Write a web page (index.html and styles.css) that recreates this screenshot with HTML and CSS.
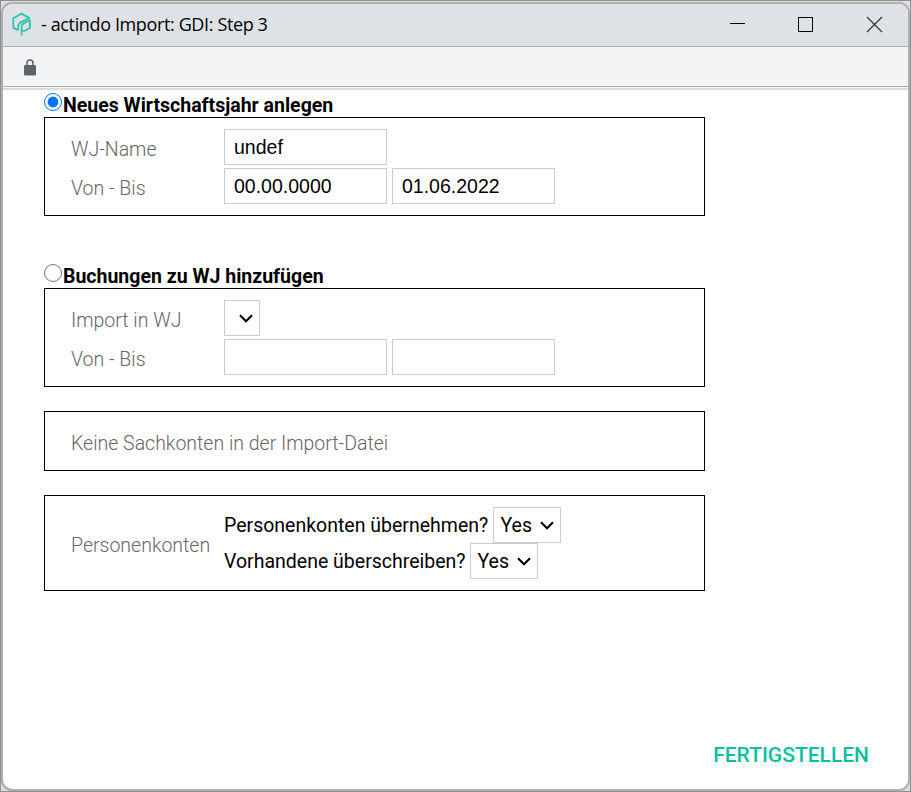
FILE: index.html
```html
<!DOCTYPE html>
<html lang="de">
<head>
<meta charset="utf-8">
<title>- actindo Import: GDI: Step 3</title>
<link rel="stylesheet" href="styles.css">
</head>
<body>
<div class="window">
  <header class="titlebar">
    <svg class="logo" width="20" height="24" viewBox="0 0 20 24" fill="none" stroke="#2cc5aa" stroke-width="1.8" stroke-linejoin="round"><path d="M6 18.300 1.300 15.600V6.300L9.500 1.600l7.800 4.500-7.500 3.700c-2.700 1.200-3.600 2.200-3.600 4.500v4"/><path d="M9.600 23.500V15c0-2.100.7-3.100 2.400-3.900l5.900-2.900v7.600l-4.900 2.900-3.200.1"/></svg>
    <span class="title">- actindo Import: GDI: Step 3</span>
    <svg class="controls" width="156" height="20" viewBox="0 0 156 20" fill="none" stroke="#000"><path d="M0 9.500h15M68.500 3.500h14v14h-14z" shape-rendering="crispEdges"/><path d="M137 3l15 15M152 3l-15 15" stroke="#333" stroke-width="1.2"/></svg>
  </header>
  <div class="toolbar">
    <svg width="12" height="17" viewBox="0 0 12 17"><path d="M3 6V4a3 3 0 0 1 6 0v2" fill="none" stroke="#5f6368" stroke-width="1.5"/><rect y="6" width="12" height="10.500" rx="1.300" fill="#5f6368"/></svg>
  </div>
  <main class="content">
    <label class="choice"><input type="radio" name="mode" checked><b>Neues Wirtschaftsjahr anlegen</b></label>
    <section class="box year">
      <div class="row"><span class="label">WJ-Name</span><input class="field" value="undef"></div>
      <div class="row"><span class="label">Von - Bis</span><input class="field" value="00.00.0000"><input class="field" value="01.06.2022"></div>
    </section>
    <label class="choice second"><input type="radio" name="mode"><b>Buchungen zu WJ hinzufügen</b></label>
    <section class="box year">
      <div class="row"><span class="label">Import in WJ</span><div class="select empty"><svg class="arrow" width="14" height="9" viewBox="0 0 14 9"><path d="M1 1.300 7 7.200l6-5.900"/></svg></div></div>
      <div class="row"><span class="label">Von - Bis</span><input class="field"><input class="field"></div>
    </section>
    <section class="box notice"><span class="label">Keine Sachkonten in der Import-Datei</span></section>
    <section class="box persons">
      <span class="label">Personenkonten</span>
      <div class="questions">
        <div class="question"><span class="q1">Personenkonten übernehmen?</span><div class="select"><span>Yes</span><svg class="arrow" width="14" height="9" viewBox="0 0 14 9"><path d="M1 1.300 7 7.200l6-5.900"/></svg></div></div>
        <div class="question"><span class="q2">Vorhandene überschreiben?</span><div class="select"><span>Yes</span><svg class="arrow" width="14" height="9" viewBox="0 0 14 9"><path d="M1 1.300 7 7.200l6-5.900"/></svg></div></div>
      </div>
    </section>
    <button class="finish">FERTIGSTELLEN</button>
  </main>
</div>
</body>
</html>
```
FILE: styles.css
```css
* { box-sizing: border-box; }
body {
  margin: 0;
  height: 792px;
  overflow: hidden;
  padding: 1px 0 0 1px;
  border: 1px solid #8f8f8f;
  background: #dedede;
  font: 19.5px/24px Roboto, sans-serif;
  color: #000;
}
.window {
  height: 789px;
  border: 2px solid #b0b0b0;
  border-left-width: 1px;
  border-radius: 11px;
  background: #fff;
  overflow: hidden;
  display: flex;
  flex-direction: column;
  box-shadow: -1px 0 0 #aaa;
}
.titlebar {
  height: 43px;
  flex: none;
  display: flex;
  align-items: center;
  background: #dee1e6;
  border-bottom: 1px solid #adadad;
  padding: 0 22px 3px 9px;
}
.title {
  font: 18px/24px "Open Sans", sans-serif;
  letter-spacing: -0.37px;
  margin: 0 0 0 9px;
  white-space: nowrap;
}
.controls { margin-left: auto; }
.toolbar {
  height: 43px;
  flex: none;
  padding: 12px 0 0 21px;
  background: linear-gradient(#f1f3f4 39px, #adadad 39px 40px, #f1f3f4 40px 41px, #dadcdf 41px);
}
.toolbar svg { display: block; }
.content {
  flex: 1;
  display: flex;
  flex-direction: column;
  align-items: flex-start;
  padding-left: 41px;
}
.choice { display: flex; height: 27px; padding-top: 3px; }
.choice input { width: 18px; height: 18px; margin: 0 1px 0 0; }
.choice b { font-weight: 700; white-space: nowrap; padding-top: 1px; }
.second { margin-top: 45px; }
.box { width: 661px; border: 1px solid #000; padding-left: 26px; }
.year { height: 99px; padding-top: 11px; display: flex; flex-direction: column; gap: 3px; }
.row { display: flex; align-items: center; gap: 5px; height: 36px; }
.label { font-weight: 300; color: #666; white-space: nowrap; }
.row .label { width: 148px; padding-top: 6px; }
.field {
  width: 163px;
  height: 36px;
  border: 1px solid #ccc;
  padding: 0 9px;
  margin: 0;
  font: 19.5px "Liberation Sans", sans-serif;
  color: #000;
  background: #fff;
}
.notice { height: 60px; margin-top: 24px; padding-top: 20px; }
.persons { height: 96px; margin-top: 24px; display: flex; align-items: center; }
.persons .label { width: 153px; padding-top: 6px; }
.question { display: flex; align-items: center; height: 36px; white-space: nowrap; }
.question span { padding-top: 2px; }
.q1 { width: 269px; }
.q2 { width: 246px; }
.select {
  width: 68px;
  height: 36px;
  border: 1px solid #ccc;
  display: flex;
  align-items: center;
  justify-content: space-between;
  padding: 0 6px 0 6.5px;
}
.select.empty { width: 36px; justify-content: flex-end; }
.arrow path { fill: none; stroke: #000; stroke-width: 2.1; }
.finish {
  border: 0;
  padding: 0;
  background: none;
  align-self: flex-end;
  margin: 152px 39px 0 0;
  font: 500 21px/24px Roboto, sans-serif;
  color: #0abf9f;
}
```
